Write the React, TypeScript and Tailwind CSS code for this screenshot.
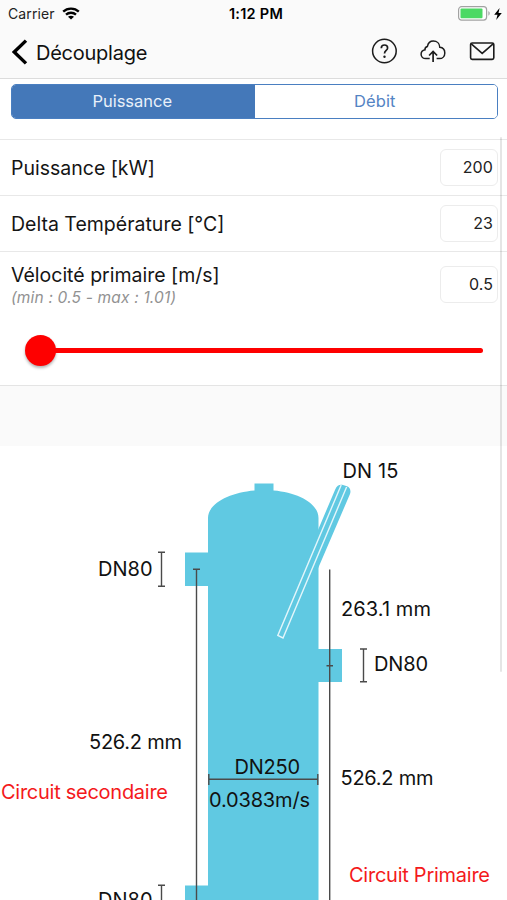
import { useState } from "react";

type Mode = "puissance" | "debit";

interface Field {
  id: string;
  label: string;
  value: string;
}

const FIELDS: Field[] = [
  { id: "power", label: "Puissance [kW]", value: "200" },
  { id: "delta", label: "Delta Température [°C]", value: "23" },
];

function StatusBar() {
  return (
    <div className="grid h-[27px] grid-cols-3 items-center pl-[8px] pr-[5px]">
      <div className="flex items-center gap-[7px]">
        <span className="text-[14px] leading-none tracking-[0.1px] text-[#222]">Carrier</span>
        <svg width="18" height="13" viewBox="0 0 18 13" fill="none" stroke="#000" strokeWidth="2.3">
          <path d="M1.2 4.6C5.4 0.5 12.6 0.5 16.8 4.6" />
          <path d="M4 7.7C6.8 5.1 11.2 5.1 14 7.7" />
          <path d="M9 12.6L6 9.7C7.6 8.3 10.4 8.3 12 9.7Z" fill="#000" stroke="none" />
        </svg>
      </div>
      <span className="pl-[2px] pt-[2px] text-center text-[14.5px] font-semibold leading-none tracking-[0.25px] text-black">
        1:12 PM
      </span>
      <div className="flex items-center justify-end gap-[3px]">
        <svg width="33" height="16" viewBox="0 0 33 16">
          <rect x="0.6" y="0.7" width="28" height="13.4" rx="3" fill="#fff" stroke="#a2a2a2" strokeWidth="1.2" />
          <rect x="2.5" y="2.5" width="22" height="9.8" rx="1" fill="#4cd964" />
          <path d="M30.4 5.1C32.2 5.9 32.2 8.9 30.4 9.7Z" fill="#a2a2a2" />
        </svg>
        <svg width="8" height="12" viewBox="0 0 8 12" fill="#000">
          <path d="M5.6 0L0.2 6.8H3.5L2.2 12L7.8 4.9H4.5Z" />
        </svg>
      </div>
    </div>
  );
}

function NavBar() {
  return (
    <div className="flex h-[51px] items-center justify-between pb-[1px] pl-[12px] pr-[12px]">
      <div className="flex items-center gap-[8px]">
        <svg width="16" height="26" viewBox="0 0 16 26" fill="none" stroke="#000" strokeWidth="3.4">
          <path d="M14 1.6L2.2 13L14 24.4" />
        </svg>
        <span className="pt-[1px] text-[20px] leading-none tracking-[-0.25px] text-[#111]">Découplage</span>
      </div>
      <div className="flex items-center gap-[23px] pb-[2px] text-[#1c1c1c]">
        <svg width="26" height="26" viewBox="0 0 26 26" fill="none" stroke="currentColor" strokeWidth="1.5">
          <circle cx="13.4" cy="13" r="11.8" />
          <path d="M10.3 10.2C10.3 8.2 11.6 7 13.5 7C15.4 7 16.6 8.2 16.6 9.9C16.6 12.4 13.5 12.5 13.5 15.6" strokeWidth="1.7" />
          <circle cx="13.5" cy="18.7" r="1.2" fill="currentColor" stroke="none" />
        </svg>
        <svg width="26" height="26" viewBox="0 0 26 26" fill="none" stroke="currentColor" strokeWidth="1.5">
          <path d="M9.7 20.6H5.8C3.2 20.6 1.1 18.7 1.1 16.2C1.1 13.8 2.8 12.2 5 11.8C4.8 10.2 5.6 8.8 7.4 8.4C8.1 5 10.4 3 13.3 3C17 3 19.6 5.6 19.8 9.2C22.7 9.5 24.8 11.8 24.8 14.9C24.8 18.2 22.5 20.6 19.4 20.6H16.6" />
          <path d="M13.1 24V13.8M9.1 17.5L13.1 13.5L17.1 17.5" strokeWidth="1.7" />
        </svg>
        <svg width="26" height="26" viewBox="0 0 26 26" fill="none" stroke="currentColor" strokeWidth="1.6">
          <rect x="1.6" y="5" width="23.2" height="16.4" rx="1.6" />
          <path d="M2 5.6L13.2 15.4L24.4 5.6" />
        </svg>
      </div>
    </div>
  );
}

function ModeSwitch({ mode, onChange }: { mode: Mode; onChange: (mode: Mode) => void }) {
  const on = "bg-[#4478b9] text-[#e9f0f9]";
  const off = "bg-white text-[#5484c4]";
  return (
    <div className="ml-[11px] mr-[9px] mt-[5px] flex h-[35px] overflow-hidden rounded-[5px] border border-[#4a7fc1] text-[16.5px]">
      <button
        onClick={() => onChange("puissance")}
        className={`flex-1 pr-[2px] tracking-[-0.02px] ${mode === "puissance" ? on : off}`}
      >
        Puissance
      </button>
      <button
        onClick={() => onChange("debit")}
        className={`flex-1 pr-[2px] tracking-[0.05px] ${mode === "debit" ? on : off}`}
      >
        Débit
      </button>
    </div>
  );
}

function ValueBox({ value }: { value: string }) {
  return (
    <div className="flex h-[37px] w-[58px] items-center justify-end rounded-[6px] border border-[#ececec] bg-white pb-[1px] pr-[4px] text-[16px] tracking-[0.1px] text-[#222]">
      {value}
    </div>
  );
}

function Slider() {
  return (
    <div className="flex items-center pl-[25px] pr-[24px]">
      <div className="size-[31px] shrink-0 rounded-full bg-[#fe0000] shadow-[0_2px_3px_rgba(0,0,0,0.3)]" />
      <div className="-ml-1 h-[5px] flex-1 rounded-full bg-[#fe0000]" />
    </div>
  );
}

// Label drawn at a fixed width so it keeps clear of the dimension lines
function Label({ x, y, w, red, children }: { x: number; y: number; w: number; red?: boolean; children: string }) {
  return (
    <text x={x} y={y} textLength={w} fontSize="20" fill={red ? "#f4191b" : "#111"}>
      {children}
    </text>
  );
}

function SeparatorDiagram() {
  return (
    <svg width="507" height="454" viewBox="0 446 507 454" className="block">
      <g fill="#60c9e2">
        <path d="M208 900V518C208 504 229 492.5 254.5 490.5V483.5H273.5V490.5C299 492.5 318.5 504 318.5 518V900Z" />
        <rect x="185" y="552.5" width="24" height="33.5" />
        <rect x="318" y="649" width="24" height="33" />
        <rect x="185" y="885.5" width="24" height="20" />
        <path d="M318 530L335.2 489.5C337 485 340 484.3 343 485L347 486.3C350 487.5 351.2 490.5 350 494L318 568.5Z" />
      </g>
      <path
        d="M341.2 485L277.8 635.5L283 638L346.6 487"
        fill="none"
        stroke="#e3f6fb"
        strokeWidth="1.4"
      />
      <g stroke="#4a4a4a" strokeWidth="1.4" fill="none">
        <path d="M196.5 569V900M193 569.3H200" />
        <path d="M329.7 569.5V900M326.5 665.7H333" />
        <path d="M161.5 552.3V586.3M158 552.3H165M158 586.3H165" />
        <path d="M363.5 649V681.8M360 649H367M360 681.8H367" />
        <path d="M161.5 885.3V900M158 885.3H165" />
        <path d="M208.8 779.3H318M208.8 774V785M317.8 774V785" />
      </g>
      <Label x={342.5} y={478} w={56}>DN 15</Label>
      <Label x={98} y={576} w={54.5}>DN80</Label>
      <Label x={341} y={615.7} w={90}>263.1 mm</Label>
      <Label x={374} y={671} w={54}>DN80</Label>
      <Label x={89} y={749} w={93}>526.2 mm</Label>
      <Label x={234.5} y={774} w={65.5}>DN250</Label>
      <Label x={209} y={807} w={101}>0.0383m/s</Label>
      <Label x={340.5} y={785} w={93}>526.2 mm</Label>
      <Label x={1} y={798.5} w={167} red>Circuit secondaire</Label>
      <Label x={349} y={882} w={141} red>Circuit Primaire</Label>
      <Label x={98} y={906.5} w={54.5}>DN80</Label>
    </svg>
  );
}

export default function App() {
  const [mode, setMode] = useState<Mode>("puissance");

  return (
    <div className="relative flex h-[900px] w-[507px] flex-col overflow-hidden bg-white font-['Inter','Liberation_Sans',sans-serif]">
      <header className="h-[79px] shrink-0 border-b border-[#dcdcdc] bg-[#fafafa]">
        <StatusBar />
        <NavBar />
      </header>

      <div className="h-[60px] shrink-0">
        <ModeSwitch mode={mode} onChange={setMode} />
      </div>

      <main className="text-[19.5px] text-[#151515]">
        {FIELDS.map((field) => (
          <div
            key={field.id}
            className="flex h-[56px] items-center justify-between border-t border-[#e8e8e8] pl-[11px] pr-[9px]"
          >
            <span className="pt-[2px]">{field.label}</span>
            <ValueBox value={field.value} />
          </div>
        ))}

        <section className="h-[134px] border-t border-[#e8e8e8]">
          <div className="flex h-[65px] items-center justify-between pl-[11px] pr-[9px]">
            <div className="flex flex-col gap-[4px] pt-[2px]">
              <span className="leading-none">Vélocité primaire [m/s]</span>
              <span className="text-[15.5px] italic leading-none tracking-[0.18px] text-[#929292]">
                (min : 0.5 - max : 1.01)
              </span>
            </div>
            <ValueBox value="0.5" />
          </div>
          <div className="mt-[18px]">
            <Slider />
          </div>
        </section>

        <div className="h-[61px] border-t border-[#e4e4e4] bg-[#fafafa]" />
        <SeparatorDiagram />
      </main>

      {/* scroll indicator */}
      <div className="absolute right-[5px] top-[137px] h-[535px] w-[2px] rounded-full bg-black/10" />
    </div>
  );
}
